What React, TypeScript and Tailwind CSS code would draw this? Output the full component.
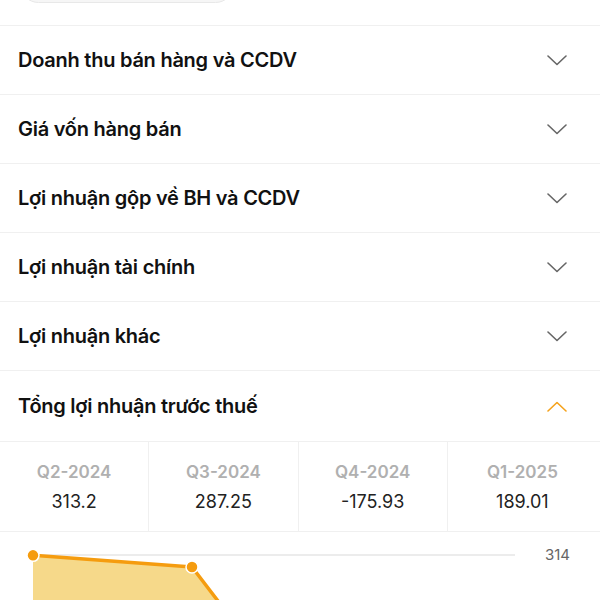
const sections = [
  'Doanh thu bán hàng và CCDV',
  'Giá vốn hàng bán',
  'Lợi nhuận gộp về BH và CCDV',
  'Lợi nhuận tài chính',
  'Lợi nhuận khác',
]

const quarters = [
  { label: 'Q2-2024', value: 313.2 },
  { label: 'Q3-2024', value: 287.25 },
  { label: 'Q4-2024', value: -175.93 },
  { label: 'Q1-2025', value: 189.01 },
]

function Chevron({ up, color }: { up?: boolean; color: string }) {
  return (
    <svg width="20" height="11" viewBox="0 0 20 11" fill="none">
      <polyline
        points={up ? '1,10 10,1.5 19,10' : '1,1 10,9.5 19,1'}
        stroke={color}
        strokeWidth="1.6"
        strokeLinecap="round"
        strokeLinejoin="round"
      />
    </svg>
  )
}

function Chart() {
  const top = 314
  const y0 = 12
  const k = 0.449
  const xs = [33, 192, 351, 510]
  const pts = quarters.map((q, i) => [xs[i], y0 + (top - q.value) * k])
  const zero = y0 + top * k
  const line = pts.map(p => p.join(',')).join(' ')
  const area = `${xs[0]},${zero} ${line} ${xs[3]},${zero}`

  return (
    <svg width="600" height="300" viewBox="0 0 600 300" className="block">
      <line x1="33" y1={y0} x2="515" y2={y0} stroke="#e6e6e6" strokeWidth="1.5" />
      <text x="545" y={y0 + 5} fontSize="15" fill="#666" fontFamily="Inter, sans-serif">314</text>
      <polygon points={area} fill="#f6d98a" />
      <polyline points={line} fill="none" stroke="#f59c0f" strokeWidth="3.5" strokeLinejoin="round" />
      {pts.map((p, i) => (
        <circle key={i} cx={p[0]} cy={p[1]} r="6" fill="#f59c0f" stroke="#fff" strokeWidth="1.5" />
      ))}
    </svg>
  )
}

export default function App() {
  return (
    <div className="h-[600px] w-[600px] overflow-hidden bg-white font-['Inter',sans-serif] text-[#111]">
      {/* search pill cut off at top */}
      <div className="flex h-[26px] items-start overflow-hidden border-b border-[#f0f0f0]">
        <div className="ml-[20px] -mt-[34px] h-[37px] w-[214px] shrink-0 rounded-full border border-[#e8e8e8] bg-[#f6f6f6]" />
      </div>

      {sections.map(s => (
        <div key={s} className="flex h-[69px] items-center justify-between border-b border-[#f0f0f0] pl-[18px] pr-[33px]">
          <span className="text-[20px] font-semibold tracking-[-0.25px]">{s}</span>
          <Chevron color="#666" />
        </div>
      ))}

      <div className="flex h-[71px] items-center justify-between border-b border-[#f0f0f0] pl-[18px] pr-[33px]">
        <span className="text-[20px] font-semibold tracking-[-0.25px]">Tổng lợi nhuận trước thuế</span>
        <Chevron up color="#f5a21b" />
      </div>

      <div className="grid h-[90px] grid-cols-4 border-b border-[#f0f0f0] pr-[3px]">
        {quarters.map((q, i) => (
          <div key={q.label} className={`flex flex-col items-center justify-center gap-[6px] ${i < 3 ? 'border-r border-[#f0f0f0]' : ''}`}>
            <span className="text-[17px] leading-[24px] font-semibold text-[#b0b0b0]">{q.label}</span>
            <span className="text-[18px] leading-[24px] text-[#222]">{q.value}</span>
          </div>
        ))}
      </div>

      <div className="pt-[11px]">
        <Chart />
      </div>
    </div>
  )
}
